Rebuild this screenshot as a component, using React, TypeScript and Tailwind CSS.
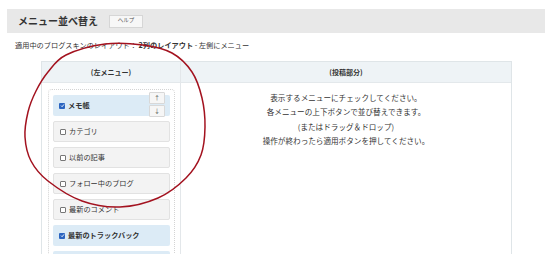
import React from 'react';

type Item = { label: string; checked: boolean };

const items: Item[] = [
  { label: 'メモ帳', checked: true },
  { label: 'カテゴリ', checked: false },
  { label: '以前の記事', checked: false },
  { label: 'フォロー中のブログ', checked: false },
  { label: '最新のコメント', checked: false },
  { label: '最新のトラックバック', checked: true },
  { label: '最新の記事', checked: true },
];

// hand-drawn red circle, smoothed through points (catmull-rom)
const ring: [number, number][] = [
  [105, 44], [143, 45], [172, 53], [192, 72], [202, 98], [205, 127], [201, 155],
  [186, 178], [158, 198], [120, 207], [82, 201], [48, 181], [31, 161], [25, 137],
  [28, 112], [36, 91], [48, 72], [66, 55],
];

const ringPath = () => {
  const n = ring.length;
  let d = `M${ring[0][0]},${ring[0][1]}`;
  for (let i = 0; i < n; i++) {
    const p0 = ring[(i - 1 + n) % n];
    const p1 = ring[i];
    const p2 = ring[(i + 1) % n];
    const p3 = ring[(i + 2) % n];
    const c1 = [p1[0] + (p2[0] - p0[0]) / 6, p1[1] + (p2[1] - p0[1]) / 6];
    const c2 = [p2[0] - (p3[0] - p1[0]) / 6, p2[1] - (p3[1] - p1[1]) / 6];
    d += ` C${c1[0]},${c1[1]} ${c2[0]},${c2[1]} ${p2[0]},${p2[1]}`;
  }
  return d;
};

const Check: React.FC<{ on: boolean }> = ({ on }) =>
  on ? (
    <span className="w-[6px] h-[6px] rounded-[1px] bg-[#2a64c0] flex items-center justify-center shrink-0">
      <svg width="5" height="5" viewBox="0 0 10 10">
        <path d="M2 5.2 L4.2 7.4 L8 2.8" stroke="#fff" strokeWidth="1.8" fill="none" />
      </svg>
    </span>
  ) : (
    <span className="w-[6px] h-[6px] rounded-[1px] border border-[#777] bg-white shrink-0" />
  );

const App: React.FC = () => {
  return (
    <div className="relative w-[550px] h-[254px] overflow-hidden bg-white text-[#333] font-['Noto_Sans_CJK_JP','Noto_Sans',sans-serif]">
      <div className="pt-[9px] px-[7px]">
        <div className="h-[24px] w-[538px] bg-[#e8e8e8] flex items-center pl-[11px]">
          <h1 className="text-[10px] font-bold leading-none text-[#333]">メニュー並べ替え</h1>
          <button className="ml-[11px] w-[34px] h-[13px] border border-[#d6d6d6] bg-[#f7f7f7] text-[5.5px] text-[#555] leading-none">
            ヘルプ
          </button>
        </div>

        <p className="mt-[7px] pl-[8px] text-[7.2px] leading-[10px]">
          適用中のブログスキンのレイアウト： <span className="font-bold">2列のレイアウト</span> - 左側にメニュー
        </p>

        <div className="mt-[11px] ml-[34px] w-[471px] border border-[#dfe5e8] grid grid-cols-[139px_1fr]">
          <div className="border-r border-[#e3e7ea]">
            <div className="h-[21px] bg-[#eef3f6] border-b border-[#e3e8eb] flex items-center justify-center text-[7px] font-bold">
              (左メニュー)
            </div>
            <div className="pt-[6px] pl-[6px] pr-[5px]">
              <div className="border border-dotted border-[#d4d4d4] rounded-[4px] bg-white pt-[5px] px-[4px] flex flex-col gap-[5px] h-[200px]">
                {items.map((it, i) => (
                  <div
                    key={i}
                    className={`relative h-[21px] shrink-0 rounded-[2px] flex items-center pl-[6px] gap-[3px] text-[7.2px] ${
                      it.checked ? 'bg-[#dcebf6] font-bold' : 'bg-[#f3f3f3] border border-[#e2e2e2]'
                    }`}
                  >
                    <Check on={it.checked} />
                    <span className="leading-none">{it.label}</span>
                    {i === 0 && (
                      <div className="absolute right-[5px] top-[-3px] flex flex-col gap-[1px]">
                        <span className="w-[16px] h-[12px] bg-[#f6f6f6] border border-[#d8d8d8] rounded-[1px] flex items-center justify-center text-[6px] font-normal text-[#555] leading-none">↑</span>
                        <span className="w-[16px] h-[12px] bg-[#f6f6f6] border border-[#d8d8d8] rounded-[1px] flex items-center justify-center text-[6px] font-normal text-[#555] leading-none">↓</span>
                      </div>
                    )}
                  </div>
                ))}
              </div>
            </div>
          </div>
          <div>
            <div className="h-[21px] bg-[#eef3f6] border-b border-[#e3e8eb] flex items-center justify-center text-[7px] font-bold">
              (投稿部分)
            </div>
            <div className="pt-[8px] flex flex-col items-center text-[7.6px] leading-[14.3px]">
              <p>表示するメニューにチェックしてください。</p>
              <p>各メニューの上下ボタンで並び替えできます。</p>
              <p>(またはドラッグ＆ドロップ)</p>
              <p>操作が終わったら適用ボタンを押してください。</p>
            </div>
          </div>
        </div>
      </div>

      <svg className="absolute left-0 top-0 pointer-events-none" width="550" height="254" viewBox="0 0 550 254">
        <path d={ringPath()} fill="none" stroke="#a3121f" strokeWidth="1.5" />
      </svg>
    </div>
  );
};

export default App;
